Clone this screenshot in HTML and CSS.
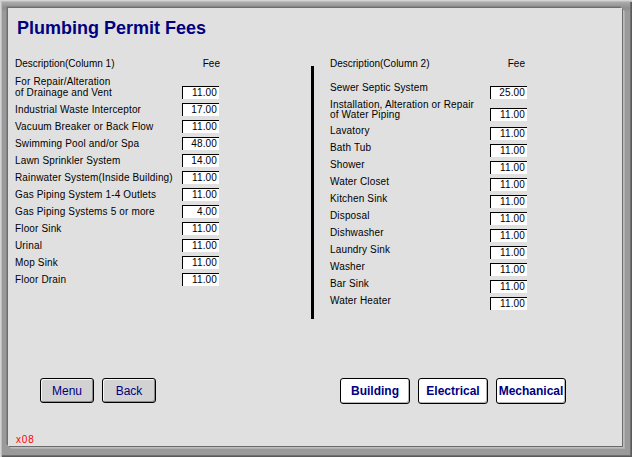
FILE: index.html
```html
<!DOCTYPE html>
<html lang="en">
<head>
<meta charset="utf-8">
<title>Plumbing Permit Fees</title>
<link rel="stylesheet" href="styles.css">
</head>
<body>
<div class="window">
  <div class="panel">
    <h1 class="title">Plumbing Permit Fees</h1>
    <div class="cols">
      <section class="col col-left">
        <div class="col-head"><span>Description(Column 1)</span><span>Fee</span></div>
        <div class="rows">
          <div class="row row-tall"><span class="label">For Repair/Alteration<br>of Drainage and Vent</span><span class="fee">11.00</span></div>
          <div class="row"><span class="label">Industrial Waste Interceptor</span><span class="fee">17.00</span></div>
          <div class="row"><span class="label">Vacuum Breaker or Back Flow</span><span class="fee">11.00</span></div>
          <div class="row"><span class="label">Swimming Pool and/or Spa</span><span class="fee">48.00</span></div>
          <div class="row"><span class="label">Lawn Sprinkler System</span><span class="fee">14.00</span></div>
          <div class="row"><span class="label">Rainwater System(Inside Building)</span><span class="fee">11.00</span></div>
          <div class="row"><span class="label">Gas Piping System 1-4 Outlets</span><span class="fee">11.00</span></div>
          <div class="row"><span class="label">Gas Piping Systems 5 or more</span><span class="fee">4.00</span></div>
          <div class="row"><span class="label">Floor Sink</span><span class="fee">11.00</span></div>
          <div class="row"><span class="label">Urinal</span><span class="fee">11.00</span></div>
          <div class="row"><span class="label">Mop Sink</span><span class="fee">11.00</span></div>
          <div class="row"><span class="label">Floor Drain</span><span class="fee">11.00</span></div>
        </div>
      </section>
      <div class="divider"></div>
      <section class="col col-right">
        <div class="col-head"><span>Description(Column 2)</span><span>Fee</span></div>
        <div class="rows">
          <div class="row row-first"><span class="label">Sewer Septic System</span><span class="fee">25.00</span></div>
          <div class="row row-two"><span class="label">Installation, Alteration or Repair<br>of Water Piping</span><span class="fee">11.00</span></div>
          <div class="row row-third"><span class="label">Lavatory</span><span class="fee">11.00</span></div>
          <div class="row"><span class="label">Bath Tub</span><span class="fee">11.00</span></div>
          <div class="row"><span class="label">Shower</span><span class="fee">11.00</span></div>
          <div class="row"><span class="label">Water Closet</span><span class="fee">11.00</span></div>
          <div class="row"><span class="label">Kitchen Sink</span><span class="fee">11.00</span></div>
          <div class="row"><span class="label">Disposal</span><span class="fee">11.00</span></div>
          <div class="row"><span class="label">Dishwasher</span><span class="fee">11.00</span></div>
          <div class="row"><span class="label">Laundry Sink</span><span class="fee">11.00</span></div>
          <div class="row"><span class="label">Washer</span><span class="fee">11.00</span></div>
          <div class="row"><span class="label">Bar Sink</span><span class="fee">11.00</span></div>
          <div class="row"><span class="label">Water Heater</span><span class="fee">11.00</span></div>
        </div>
      </section>
    </div>
    <div class="actions">
      <div class="group">
        <button class="btn btn-nav">Menu</button>
        <button class="btn btn-nav">Back</button>
      </div>
      <div class="group">
        <button class="btn btn-link">Building</button>
        <button class="btn btn-link">Electrical</button>
        <button class="btn btn-link">Mechanical</button>
      </div>
    </div>
    <div class="code">x08</div>
  </div>
</div>
</body>
</html>
```
FILE: styles.css
```css
* { box-sizing: border-box; }
html, body { margin: 0; padding: 0; }
body {
  width: 632px;
  height: 457px;
  overflow: hidden;
  background: #9a9a9a;
  font-family: "Liberation Sans", Arial, sans-serif;
}
.window {
  width: 632px;
  height: 457px;
  padding: 8px 10px 11px 8px;
  background: linear-gradient(to bottom, #b4b4b4 0, #a2a2a2 4px, #8e8e8e 8px, #9a9a9a 12px, #9a9a9a 100%);
  box-shadow: inset 1px 1px 0 #d4d4d4, inset 2px 2px 0 #bcbcbc, inset -1px -1px 0 #5a5a5a, inset -2px -2px 0 #707070;
}
.panel {
  height: 438px;
  background: #e0e0e0;
  box-shadow: -1px -1px 0 #6e6e6e, -2px -2px 0 #858585, 1px 1px 0 #6a6a6a, 2px 2px 0 #bdbdbd, 3px 3px 0 #b0b0b0;
}
.title {
  margin: 0;
  padding: 9px 0 0 9px;
  font-size: 18px;
  line-height: 22px;
  font-weight: bold;
  color: #000080;
}
.cols {
  display: flex;
  align-items: flex-start;
  margin-top: 19px;
  padding-left: 7px;
}
.col {
  font-size: 10px;
  color: #000;
}
.col-left { width: 204px; }
.col-right { width: 197px; margin-left: 16px; }
.divider {
  width: 3px;
  height: 253px;
  margin-top: 8px;
  margin-left: 92px;
  background: #000;
}
.col-head {
  display: flex;
  justify-content: space-between;
  height: 12px;
  line-height: 12px;
}
.col-left .col-head { margin-right: -1px; }
.col-right .col-head { padding-right: 2px; }
.rows { margin-top: 6px; }
.row {
  display: flex;
  justify-content: space-between;
  align-items: flex-end;
  height: 17px;
}
.label {
  line-height: 12px;
  white-space: nowrap;
  letter-spacing: 0.15px;
  margin-bottom: 2.5px;
}
.fee {
  width: 37px;
  height: 13px;
  margin-bottom: 2px;
  padding-right: 2px;
  background: #fff;
  border-top: 1px solid #000;
  border-left: 1px solid #000;
  text-align: right;
  font-size: 10px;
  line-height: 11px;
  letter-spacing: 0.15px;
}
.row-tall { height: 25px; }
.row-tall .label { line-height: 11px; margin-bottom: 3px; }
.col-right .label { margin-bottom: 5px; }
.col-right .row-first { height: 25px; }
.col-right .row-first .label { margin-bottom: 7px; }
.col-right .row-two { height: 22px; }
.col-right .row-two .label { line-height: 10px; margin-bottom: 3px; }
.col-right .row-third { height: 19px; }
.actions {
  display: flex;
  justify-content: space-between;
  align-items: flex-start;
  margin-top: 59px;
  padding: 0 56px 0 32px;
}
.group {
  display: flex;
  gap: 8px;
}
.btn {
  height: 26px;
  padding: 0;
  border: 1px solid #000;
  border-radius: 3px;
  font-family: "Liberation Sans", Arial, sans-serif;
  font-size: 12px;
  color: #000080;
}
.btn-nav {
  width: 54px;
  height: 25px;
  background: #d2d2d2;
  box-shadow: inset 1px 1px 0 #f6f6f6, inset -1px -1px 0 #8a8a8a;
}
.btn-link {
  width: 70px;
  background: #fff;
  font-weight: bold;
  box-shadow: inset -1px -1px 0 #b4b4b4;
}
.code {
  margin: 30px 0 0 8px;
  font-size: 10px;
  line-height: 12px;
  letter-spacing: 0.8px;
  color: #ff0000;
}
```
